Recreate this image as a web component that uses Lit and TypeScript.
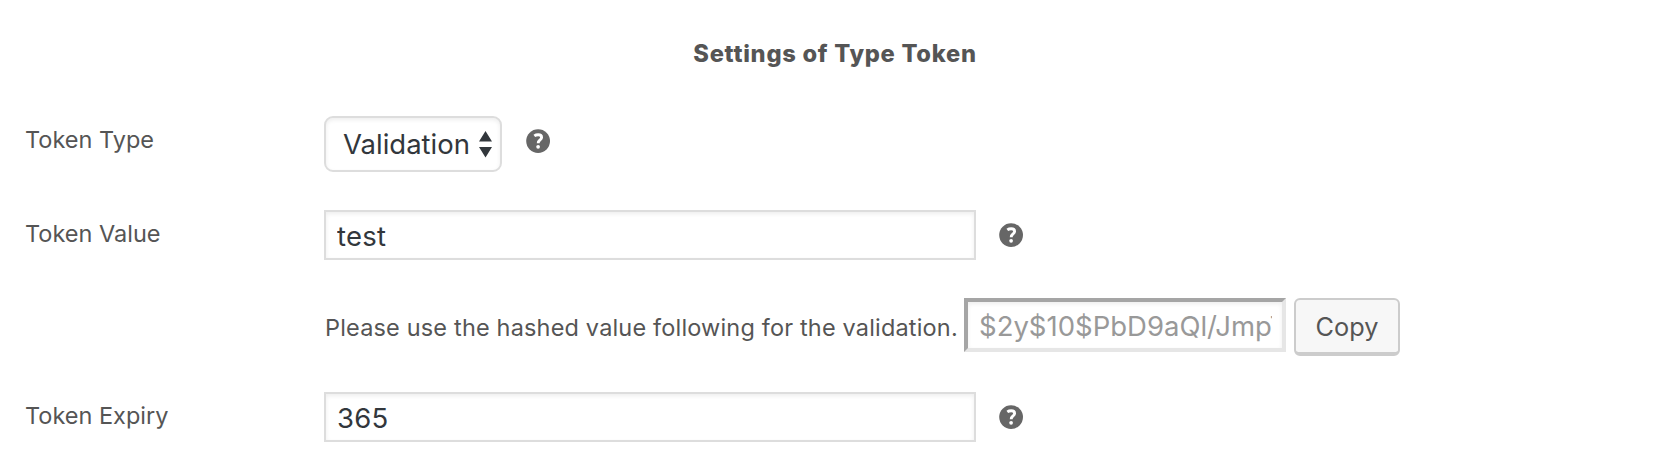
import { LitElement, html, css } from "lit";
import { customElement } from "lit/decorators.js";

@customElement("help-tip")
class HelpTip extends LitElement {
  static styles = css`
    :host { display: block; width: 24px; height: 24px; flex: none; }
    svg { display: block; }
  `;
  render() {
    return html`<svg width="24" height="24" viewBox="0 0 24 24" role="img" aria-label="Help">
      <circle cx="12.1" cy="12.1" r="11.9" fill="#666"></circle>
      <path d="M8.3 6.9C9.6 6 10.9 5.7 12.2 5.7C14.3 5.7 15.6 6.7 15.6 8.4C15.6 11 12.2 11 12.2 14.2" fill="none" stroke="#fff" stroke-width="2.9"></path>
      <circle cx="12.1" cy="17.8" r="1.85" fill="#fff"></circle>
    </svg>`;
  }
}

@customElement("app-root")
class AppRoot extends LitElement {
  static styles = css`
    :host {
      display: block;
      box-sizing: border-box;
      height: 470px;
      background: #fff;
      color: #555;
      font: 400 23.5px/30px Inter, "Liberation Sans", sans-serif;
      overflow: hidden;
    }
    * { box-sizing: border-box; }
    h2 {
      margin: 0;
      padding: 39px 0 0 2px;
      height: 116px;
      text-align: center;
      font-size: 23.7px;
      font-weight: 800;
      line-height: 30px;
      letter-spacing: 0.72px;
      font-feature-settings: "calt" 0, "liga" 0;
    }
    .row {
      display: grid;
      grid-template-columns: 299px 1fr;
      align-items: start;
      padding-left: 25px;
      margin-bottom: 38px;
    }
    .hash-row { margin-bottom: 36px; }
    .label { padding-top: 9px; white-space: nowrap; }
    .field { display: flex; align-items: flex-start; }
    .field help-tip { margin: 13px 0 0 23px; }
    .field .select + help-tip { margin-left: 23.5px; }
    .select {
      display: flex;
      width: 178px;
      height: 56px;
      padding: 10px 8px 0 17px;
      justify-content: space-between;
      border: 2px solid #ddd;
      border-radius: 9px;
      box-shadow: inset 0 2px 4px rgba(0, 0, 0, 0.07);
      color: #32373c;
      font-size: 27.5px;
      line-height: 32px;
    }
    .select svg { margin-top: 2px; flex: none; }
    input {
      display: block;
      width: 652px;
      height: 50px;
      margin: 0;
      padding: 2px 11px 0;
      border: 2px solid #ddd;
      border-radius: 0;
      outline: none;
      background: #fff;
      box-shadow: inset 0 2px 4px rgba(0, 0, 0, 0.07);
      color: #32373c;
      font: 400 27.5px/32px Inter, "Liberation Sans", sans-serif;
      letter-spacing: 0.2px;
    }
    .hint { width: 640px; padding: 15px 0 0 1px; white-space: nowrap; letter-spacing: 0.17px; }
    .hash {
      width: 322px;
      height: 54px;
      padding: 1px 10px 0 11px;
      border: 4px solid;
      border-color: #a5a5a5 #e6e6e6 #e6e6e6 #a5a5a5;
      color: #999;
      letter-spacing: 0;
    }
    button {
      width: 106px;
      height: 58px;
      margin: 0 0 0 8px;
      padding: 1px 0 0;
      border: 2px solid #ccc;
      border-bottom-width: 4px;
      border-radius: 6px;
      background: #f7f7f7;
      color: #555;
      font: 400 25.3px/32px Inter, "Liberation Sans", sans-serif;
    }
  `;
  render() {
    return html`
      <h2>Settings of Type Token</h2>
      <div class="row">
        <div class="label">Token Type</div>
        <div class="field">
          <div class="select">
            <span>Validation</span>
            <svg width="13" height="28" viewBox="0 0 13 28"><path d="M0 11.5L6.5 1L13 11.5ZM0 17H13L6.5 27.5Z" fill="#32373c"></path></svg>
          </div>
          <help-tip></help-tip>
        </div>
      </div>
      <div class="row">
        <div class="label">Token Value</div>
        <div class="field"><input .value=${"test"} /><help-tip></help-tip></div>
      </div>
      <div class="row hash-row">
        <div></div>
        <div class="field">
          <div class="hint">Please use the hashed value following for the validation.</div>
          <input class="hash" readonly .value=${"$2y$10$PbD9aQl/JmpT"} />
          <button>Copy</button>
        </div>
      </div>
      <div class="row">
        <div class="label">Token Expiry</div>
        <div class="field"><input .value=${"365"} /><help-tip></help-tip></div>
      </div>
    `;
  }
}
